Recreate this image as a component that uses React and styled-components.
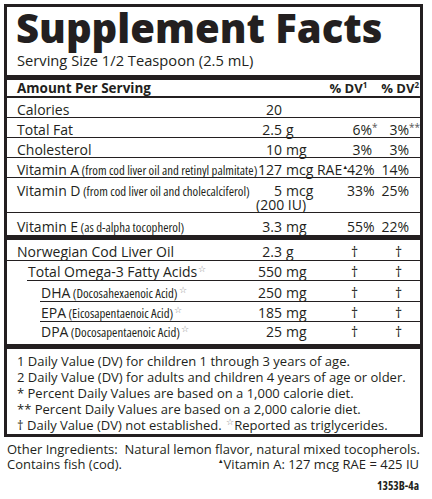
import styled, { createGlobalStyle } from 'styled-components';

const Global = createGlobalStyle`
  body {
    margin: 0;
    background: #fff;
    color: #231f20;
    font-family: "Open Sans", "Noto Sans", sans-serif;
  }
`;

const ink = '#231f20';

const Page = styled.div`
  width: 432px;
  height: 499px;
  box-sizing: border-box;
  padding: 4px 0 0 4px;
  overflow: hidden;
`;

const Panel = styled.div`
  width: 419px;
  box-sizing: border-box;
  border: 3px solid ${ink};
`;

const Title = styled.h1`
  margin: 0;
  padding: 0 0 0 9px;
  height: 38px;
  font-size: 40px;
  font-weight: 800;
  line-height: 42px;
  white-space: nowrap;
`;

const Serving = styled.div`
  padding: 5px 0 5px 10px;
  font-size: 14.7px;
  line-height: 20px;
`;

const Bar = styled.div`
  height: ${(p) => p.$h || 5}px;
  background: ${ink};
`;

const Head = styled.div`
  display: flex;
  align-items: baseline;
  height: 16px;
  border-bottom: 2px solid ${ink};
  padding: 0 1px 0 10px;
  font-size: 13.5px;
  font-weight: 700;
  line-height: 16px;
`;

const HeadLabel = styled.div`
  flex: 1;
`;

const HeadDv = styled.div`
  margin-left: ${(p) => p.$gap || 0}px;
  font-size: 13px;
  sup {
    font-size: 8px;
    vertical-align: 5px;
    line-height: 0;
  }
`;

const Row = styled.div`
  display: grid;
  grid-template-columns: minmax(0, 1fr) 26px 65px 25px 37px;
  grid-auto-rows: ${(p) => p.$lh || 14}px;
  height: ${(p) => p.$h || 20}px;
  box-sizing: border-box;
  padding: ${(p) => p.$pt ?? 5}px 11px 0 0;
  font-size: 14px;
  line-height: ${(p) => p.$lh || 14}px;
  white-space: nowrap;
  background: linear-gradient(${ink}, ${ink}) right bottom /
    calc(100% - ${(p) => p.$lineFrom || 0}px) ${(p) => (p.$noLine ? 0 : 1)}px no-repeat;
`;

const Label = styled.div`
  padding-left: ${(p) => 10 + (p.$indent || 0)}px;
  overflow: visible;
`;

const Small = styled.span`
  font-family: "Open Sans", sans-serif;
  font-stretch: 75%;
  font-size: 12.8px;
`;

const Num = styled.div`
  text-align: right;
`;

const Unit = styled.div`
  padding-left: 4px;
`;

const Second = styled.div`
  grid-column: 2 / 4;
  padding-top: 1px;
`;

const Dv = styled.div`
  text-align: right;
  padding-right: ${(p) => p.$off || 0}px;
`;

const Over = styled.span`
  display: inline-block;
  width: 0;
  text-align: left;
  font-size: 10px;
  vertical-align: 4px;
  line-height: 0;
  color: #555;
`;

const Tri = styled.span`
  font-size: 6px;
  vertical-align: 6px;
  line-height: 0;
`;

const Star = styled.span`
  font-size: 9px;
  vertical-align: 5px;
  line-height: 0;
  color: #8a8a8a;
  margin-left: 1px;
`;

const Notes = styled.div`
  padding: 4px 4px 1px 10px;
  font-size: 13px;
  line-height: 16px;
  white-space: nowrap;
`;

const Foot = styled.div`
  width: 415px;
  box-sizing: border-box;
  padding: 5px 0 0 3px;
  font-size: 13px;
  line-height: 15px;
  white-space: nowrap;
`;

const FootLine = styled.div`
  display: flex;
  justify-content: space-between;
`;

const Code = styled.div`
  margin-top: 6px;
  text-align: right;
  font-family: "Open Sans", sans-serif;
  font-stretch: 75%;
  font-size: 11.5px;
  font-weight: 700;
`;

const rowsTop = [
  { label: 'Calories', num: '20' },
  { label: 'Total Fat', num: '2.5', unit: 'g', dv1: '6%', s1: '*', dv2: '3%', s2: '**' },
  { label: 'Cholesterol', num: '10', unit: 'mg', dv1: '3%', dv2: '3%' },
  {
    label: 'Vitamin A',
    note: '(from cod liver oil and retinyl palmitate)',
    num: '127',
    unit: 'mcg RAE',
    tri: true,
    dv1: '42%',
    dv2: '14%',
  },
];

const rowsOil = [
  { label: 'Norwegian Cod Liver Oil', num: '2.3', unit: 'g', h: 21 },
  { label: 'Total Omega-3 Fatty Acids', num: '550', unit: 'mg', indent: 11, star: true, h: 20, lineFrom: 20, pt: 4 },
  { label: 'DHA', note: '(Docosahexaenoic Acid)', num: '250', unit: 'mg', indent: 24, star: true, h: 21, lineFrom: 33 },
  { label: 'EPA', note: '(Eicosapentaenoic Acid)', num: '185', unit: 'mg', indent: 24, star: true, h: 20, lineFrom: 33, pt: 4 },
  { label: 'DPA', note: '(Docosapentaenoic Acid)', num: '25', unit: 'mg', indent: 24, star: true, h: 22, noLine: true, pt: 3 },
];

function Pct({ v, s, off }) {
  return (
    <Dv $off={off}>
      {v}
      {s && <Over>{s}</Over>}
    </Dv>
  );
}

export default function App() {
  return (
    <Page>
      <Global />
      <Panel>
        <Title>Supplement Facts</Title>
        <Serving>Serving Size 1/2 Teaspoon (2.5 mL)</Serving>
        <Bar />
        <Head>
          <HeadLabel>Amount Per Serving</HeadLabel>
          <HeadDv>
            % DV<sup>1</sup>
          </HeadDv>
          <HeadDv $gap={14}>
            % DV<sup>2</sup>
          </HeadDv>
        </Head>
        {rowsTop.map((r) => (
          <Row key={r.label}>
            <Label>
              {r.label}
              {r.note && <Small> {r.note}</Small>}
            </Label>
            <Num>{r.num}</Num>
            <Unit>
              {r.unit}
              {r.tri && <Tri>▲</Tri>}
            </Unit>
            <Pct v={r.dv1} s={r.s1} />
            <Pct v={r.dv2} s={r.s2} />
          </Row>
        ))}
        <Row $h={35} $lh={13} $pt={6}>
          <Label>
            Vitamin D<Small> (from cod liver oil and cholecalciferol)</Small>
          </Label>
          <Num>5</Num>
          <Unit>mcg</Unit>
          <Pct v="33%" />
          <Pct v="25%" />
          <Second>(200 IU)</Second>
        </Row>
        <Row $h={22} $pt={7} $noLine>
          <Label>
            Vitamin E<Small> (as d-alpha tocopherol)</Small>
          </Label>
          <Num>3.3</Num>
          <Unit>mg</Unit>
          <Pct v="55%" />
          <Pct v="22%" />
        </Row>
        <Bar />
        {rowsOil.map((r) => (
          <Row key={r.label} $h={r.h} $lineFrom={r.lineFrom} $noLine={r.noLine} $pt={r.pt}>
            <Label $indent={r.indent}>
              {r.label}
              {r.note && <Small> {r.note}</Small>}
              {r.star && <Star>☆</Star>}
            </Label>
            <Num>{r.num}</Num>
            <Unit>{r.unit}</Unit>
            <Dv $off={14}>†</Dv>
            <Dv $off={7}>†</Dv>
          </Row>
        ))}
        <Bar />
        <Notes>
          <div>1 Daily Value (DV) for children 1 through 3 years of age.</div>
          <div>2 Daily Value (DV) for adults and children 4 years of age or older.</div>
          <div>* Percent Daily Values are based on a 1,000 calorie diet.</div>
          <div>** Percent Daily Values are based on a 2,000 calorie diet.</div>
          <div>
            † Daily Value (DV) not established. <Star>☆</Star>Reported as triglycerides.
          </div>
        </Notes>
      </Panel>
      <Foot>
        <div>Other Ingredients:&nbsp; Natural lemon flavor, natural mixed tocopherols.</div>
        <FootLine>
          <span>Contains fish (cod).</span>
          <span>
            <Tri>▲</Tri>Vitamin A: 127 mcg RAE = 425 IU
          </span>
        </FootLine>
        <Code>1353B-4a</Code>
      </Foot>
    </Page>
  );
}
